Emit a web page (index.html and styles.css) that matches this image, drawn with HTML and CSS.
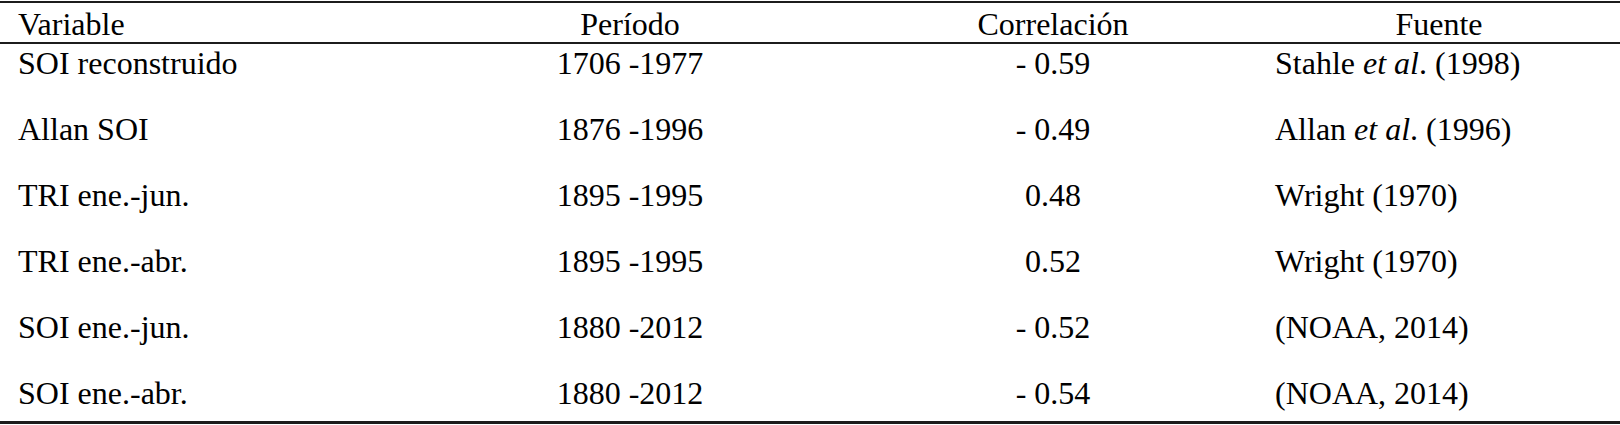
FILE: index.html
```html
<!DOCTYPE html>
<html lang="es">
<head>
    <meta charset="UTF-8">
    <meta name="viewport" content="width=device-width, initial-scale=1.0">
    <title>Correlaciones</title>
    <link rel="stylesheet" href="styles.css">
</head>
<body>
    <table class="data-table">
        <colgroup>
            <col class="col-var">
            <col class="col-period">
            <col class="col-corr">
            <col class="col-source">
        </colgroup>
        <thead>
            <tr>
                <th class="var">Variable</th>
                <th>Período</th>
                <th>Correlación</th>
                <th>Fuente</th>
            </tr>
        </thead>
        <tbody>
            <tr>
                <td class="var">SOI reconstruido</td>
                <td class="center">1706 -1977</td>
                <td class="center">- 0.59</td>
                <td class="source">Stahle <i>et al</i>. (1998)</td>
            </tr>
            <tr>
                <td class="var">Allan SOI</td>
                <td class="center">1876 -1996</td>
                <td class="center">- 0.49</td>
                <td class="source">Allan <i>et al</i>. (1996)</td>
            </tr>
            <tr>
                <td class="var">TRI ene.-jun.</td>
                <td class="center">1895 -1995</td>
                <td class="center">0.48</td>
                <td class="source">Wright (1970)</td>
            </tr>
            <tr>
                <td class="var">TRI ene.-abr.</td>
                <td class="center">1895 -1995</td>
                <td class="center">0.52</td>
                <td class="source">Wright (1970)</td>
            </tr>
            <tr>
                <td class="var">SOI ene.-jun.</td>
                <td class="center">1880 -2012</td>
                <td class="center">- 0.52</td>
                <td class="source">(NOAA, 2014)</td>
            </tr>
            <tr>
                <td class="var">SOI ene.-abr.</td>
                <td class="center">1880 -2012</td>
                <td class="center">- 0.54</td>
                <td class="source">(NOAA, 2014)</td>
            </tr>
        </tbody>
    </table>
</body>
</html>
```

FILE: styles.css
```css
body {
    margin: 0;
    color: #000;
    background-color: #fff;
    font-family: "Liberation Serif", "Times New Roman", serif;
}
.data-table {
    width: 1620px;
    margin-top: 1px;
    table-layout: fixed;
    border-collapse: separate;
    border-spacing: 0;
    border-top: 2px solid #1c1c1c;
    border-bottom: 3px solid #1c1c1c;
    font-size: 32px;
    line-height: 36px;
}
.col-var {
    width: 412px;
}
.col-period {
    width: 436px;
}
.col-corr {
    width: 410px;
}
.col-source {
    width: 362px;
}
th {
    font-weight: normal;
    text-align: center;
    line-height: 35px;
    padding: 4px 0 0;
    border-bottom: 2px solid #1c1c1c;
}
td {
    padding: 1px 0 29px;
    white-space: nowrap;
}
tbody tr:last-child td {
    padding-bottom: 10px;
}
th.var, td.var {
    text-align: left;
    padding-left: 18px;
}
.center {
    text-align: center;
}
.source {
    text-align: left;
    padding-left: 17px;
}
```
